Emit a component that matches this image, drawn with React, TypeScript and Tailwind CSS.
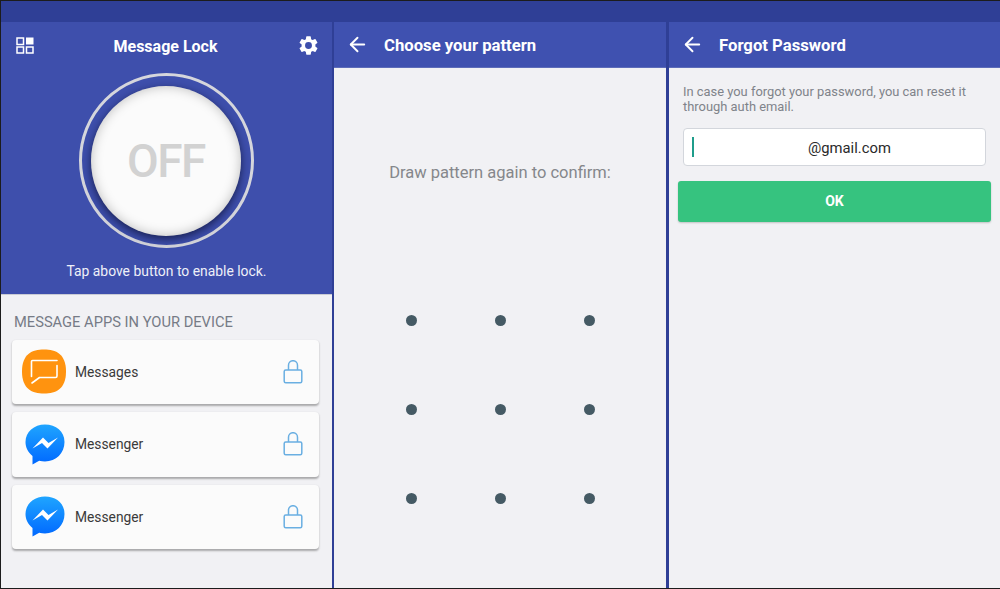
import { ArrowLeft } from "lucide-react";

const SettingsIcon = () => (
  <svg width="23" height="23" viewBox="0 0 24 24" fill="#fff">
    <path d="M19.14 12.94c.04-.3.06-.61.06-.94s-.02-.64-.07-.94l2.03-1.58a.49.49 0 0 0 .12-.61l-1.92-3.32a.49.49 0 0 0-.59-.22l-2.39.96a7 7 0 0 0-1.62-.94l-.36-2.54a.48.48 0 0 0-.48-.41h-3.84a.47.47 0 0 0-.47.41l-.36 2.54c-.59.24-1.13.57-1.62.94l-2.39-.96a.48.48 0 0 0-.59.22L2.74 8.87a.47.47 0 0 0 .12.61l2.03 1.58c-.05.3-.09.63-.09.94s.02.64.07.94l-2.03 1.58a.49.49 0 0 0-.12.61l1.92 3.32c.12.22.37.29.59.22l2.39-.96c.5.38 1.03.7 1.62.94l.36 2.54c.05.24.24.41.48.41h3.84c.24 0 .44-.17.47-.41l.36-2.54a7 7 0 0 0 1.62-.94l2.39.96c.22.08.47 0 .59-.22l1.92-3.32a.47.47 0 0 0-.12-.61zM12 15.6A3.6 3.6 0 1 1 12 8.4a3.6 3.6 0 0 1 0 7.2z" />
  </svg>
);

const GridIcon = () => (
  <svg width="18" height="17" viewBox="0 0 18 17" fill="none" stroke="#fff" strokeWidth="1.5">
    <rect x="1" y="1" width="6.5" height="6.5" />
    <rect x="10" y="0.5" width="7.5" height="7" fill="#fff" stroke="none" />
    <rect x="1" y="10" width="6.5" height="6" />
    <rect x="10.5" y="10" width="6.5" height="6" />
  </svg>
);

const MessagesIcon = () => (
  <svg width="44" height="45" viewBox="0 0 44 45">
    <path d="M22 0.5C34 0.5 44 5 44 22.5S34 44.5 22 44.5 0 40 0 22.5 10 0.5 22 0.5z" fill="#ff930f" />
    <path d="M35 11.5H10.5a1 1 0 0 0-1 1V27.5M35 16.5V27a1.5 1.5 0 0 1-1.5 1.5H17.5L10 34" fill="none" stroke="#fff" strokeWidth="1.6" strokeLinecap="round" strokeLinejoin="round" />
  </svg>
);

const MessengerIcon = ({ id }: { id: string }) => (
  <svg width="40" height="41" viewBox="0 0 40 41">
    <defs>
      <linearGradient id={id} x1="0" y1="0" x2="0" y2="1">
        <stop offset="0" stopColor="#1fa5ff" />
        <stop offset="1" stopColor="#0068ff" />
      </linearGradient>
    </defs>
    <path d="M20 0.5C9 0.5 0.5 8 0.5 18c0 5.6 2.7 10.6 7 13.9V40.5l6.7-3.8C16 37.2 18 37.5 20 37.5c11 0 19.5-8.5 19.5-19.5S31 0.5 20 0.5z" fill={`url(#${id})`} />
    <path d="M7.5 24.5L18 13.5l5.5 5.5 9.5-5.5-10.5 11-5.5-5.5z" fill="#fff" />
  </svg>
);

const LockIcon = () => (
  <svg width="20" height="24" viewBox="0 0 20 24" fill="none" stroke="#6aafe2" strokeWidth="1.5">
    <rect x="1.2" y="10" width="17.6" height="12.7" rx="1.5" />
    <path d="M5.5 10V5.2a4.5 4.5 0 0 1 9 0V10" />
  </svg>
);

const apps = [
  { name: "Messages", icon: <MessagesIcon />, pl: "pl-[10px]", gap: "gap-[9px]" },
  { name: "Messenger", icon: <MessengerIcon id="m1" />, pl: "pl-[13px]", gap: "gap-[10px]" },
  { name: "Messenger", icon: <MessengerIcon id="m2" />, pl: "pl-[13px]", gap: "gap-[10px]" },
];

const TitleBar = ({ title }: { title: string }) => (
  <div className="h-[46px] bg-[#3f51b0] border-b border-[#5d6cb9] flex items-center pl-[12px] text-white">
    <ArrowLeft size={23} strokeWidth={2} />
    <span className="ml-[15px] pt-[4px] text-[16.7px] font-bold leading-none">{title}</span>
  </div>
);

const LockPanel = () => (
  <div className="w-[331px] h-full bg-[#f1f1f4] flex flex-col">
    <div className="h-[273px] bg-[#3e4fac] border-b border-[#c9cbd4] flex flex-col items-center text-white">
      <div className="w-full h-[46px] flex items-center justify-between pl-[15px] pr-[12px]">
        <GridIcon />
        <span className="pt-[3px] text-[16px] font-bold leading-none">Message Lock</span>
        <SettingsIcon />
      </div>
      <div className="mt-[5px] mr-[1px] w-[175px] h-[175px] rounded-full border-[3px] border-[#d5d6dc] flex items-center justify-center">
        <div className="w-[150px] h-[150px] rounded-full bg-[#fbfbfb] shadow-[0_3px_9px_rgba(15,20,60,0.8),inset_0_0_12px_rgba(0,0,0,0.25)] flex items-center justify-center">
          <span className="text-[#d2d2d2] text-[46px] leading-none font-medium tracking-[-1.5px]">OFF</span>
        </div>
      </div>
      <p className="mt-[17px] text-[13.9px] leading-none text-[#eef0f8]">Tap above button to enable lock.</p>
    </div>
    <p className="mt-[20px] ml-[13px] text-[14.7px] leading-none text-[#767b86]">MESSAGE APPS IN YOUR DEVICE</p>
    <div className="mt-[10px] mx-[11px] w-[307px] flex flex-col gap-[8px]">
      {apps.map((app, i) => (
        <div key={i} className={`h-[64.5px] rounded-[4px] bg-[#fbfbfb] shadow-[0_1.5px_2px_rgba(0,0,0,0.3)] flex items-center ${app.pl} ${app.gap} pr-[16px]`}>
          {app.icon}
          <span className="flex-1 text-[13.8px] text-[#3a3a3a]">{app.name}</span>
          <LockIcon />
        </div>
      ))}
    </div>
  </div>
);

const PatternPanel = () => (
  <div className="w-[332px] h-full ml-[2px] mr-[3px] bg-[#f1f1f4] flex flex-col">
    <TitleBar title="Choose your pattern" />
    <p className="mt-[97px] text-center text-[16.5px] leading-none text-[#85878b]">Draw pattern again to confirm:</p>
    <div className="mt-[133px] ml-[71.5px] grid grid-cols-3 gap-x-[78px] gap-y-[78px] w-fit">
      {Array.from({ length: 9 }).map((_, i) => (
        <span key={i} className="w-[11px] h-[11px] rounded-full bg-[#455a64]" />
      ))}
    </div>
  </div>
);

const ForgotPanel = () => (
  <div className="flex-1 h-full bg-[#f1f1f4] flex flex-col">
    <TitleBar title="Forgot Password" />
    <p className="mt-[16px] mx-[14px] text-[12.9px] leading-[15px] text-[#7f838a]">
      In case you forgot your password, you can reset it through auth email.
    </p>
    <div className="mt-[14px] mx-[14px] h-[38px] bg-white border border-[#d3d6dc] rounded-[4px] flex items-center pl-[8px]">
      <span className="w-[2px] h-[20px] bg-[#1f9d8b]" />
      <span className="ml-[114px] pt-[3px] text-[14.8px] text-[#2a2a2a]">@gmail.com</span>
    </div>
    <div className="mt-[14.5px] mx-[9px] h-[41.5px] bg-[#36c37f] rounded-[3px] shadow-[0_1px_2px_rgba(0,0,0,0.2)] flex items-center justify-center text-white text-[14px] font-bold">
      OK
    </div>
  </div>
);

export default function App() {
  return (
    <div className="w-[1000px] h-[589px] overflow-hidden bg-[#2f3f96] border-l border-t border-b border-[#1c1c1c] flex flex-col font-['Roboto',sans-serif]">
      <div className="h-[21px] shrink-0" />
      <div className="flex-1 min-h-0 flex">
        <LockPanel />
        <PatternPanel />
        <ForgotPanel />
      </div>
    </div>
  );
}
